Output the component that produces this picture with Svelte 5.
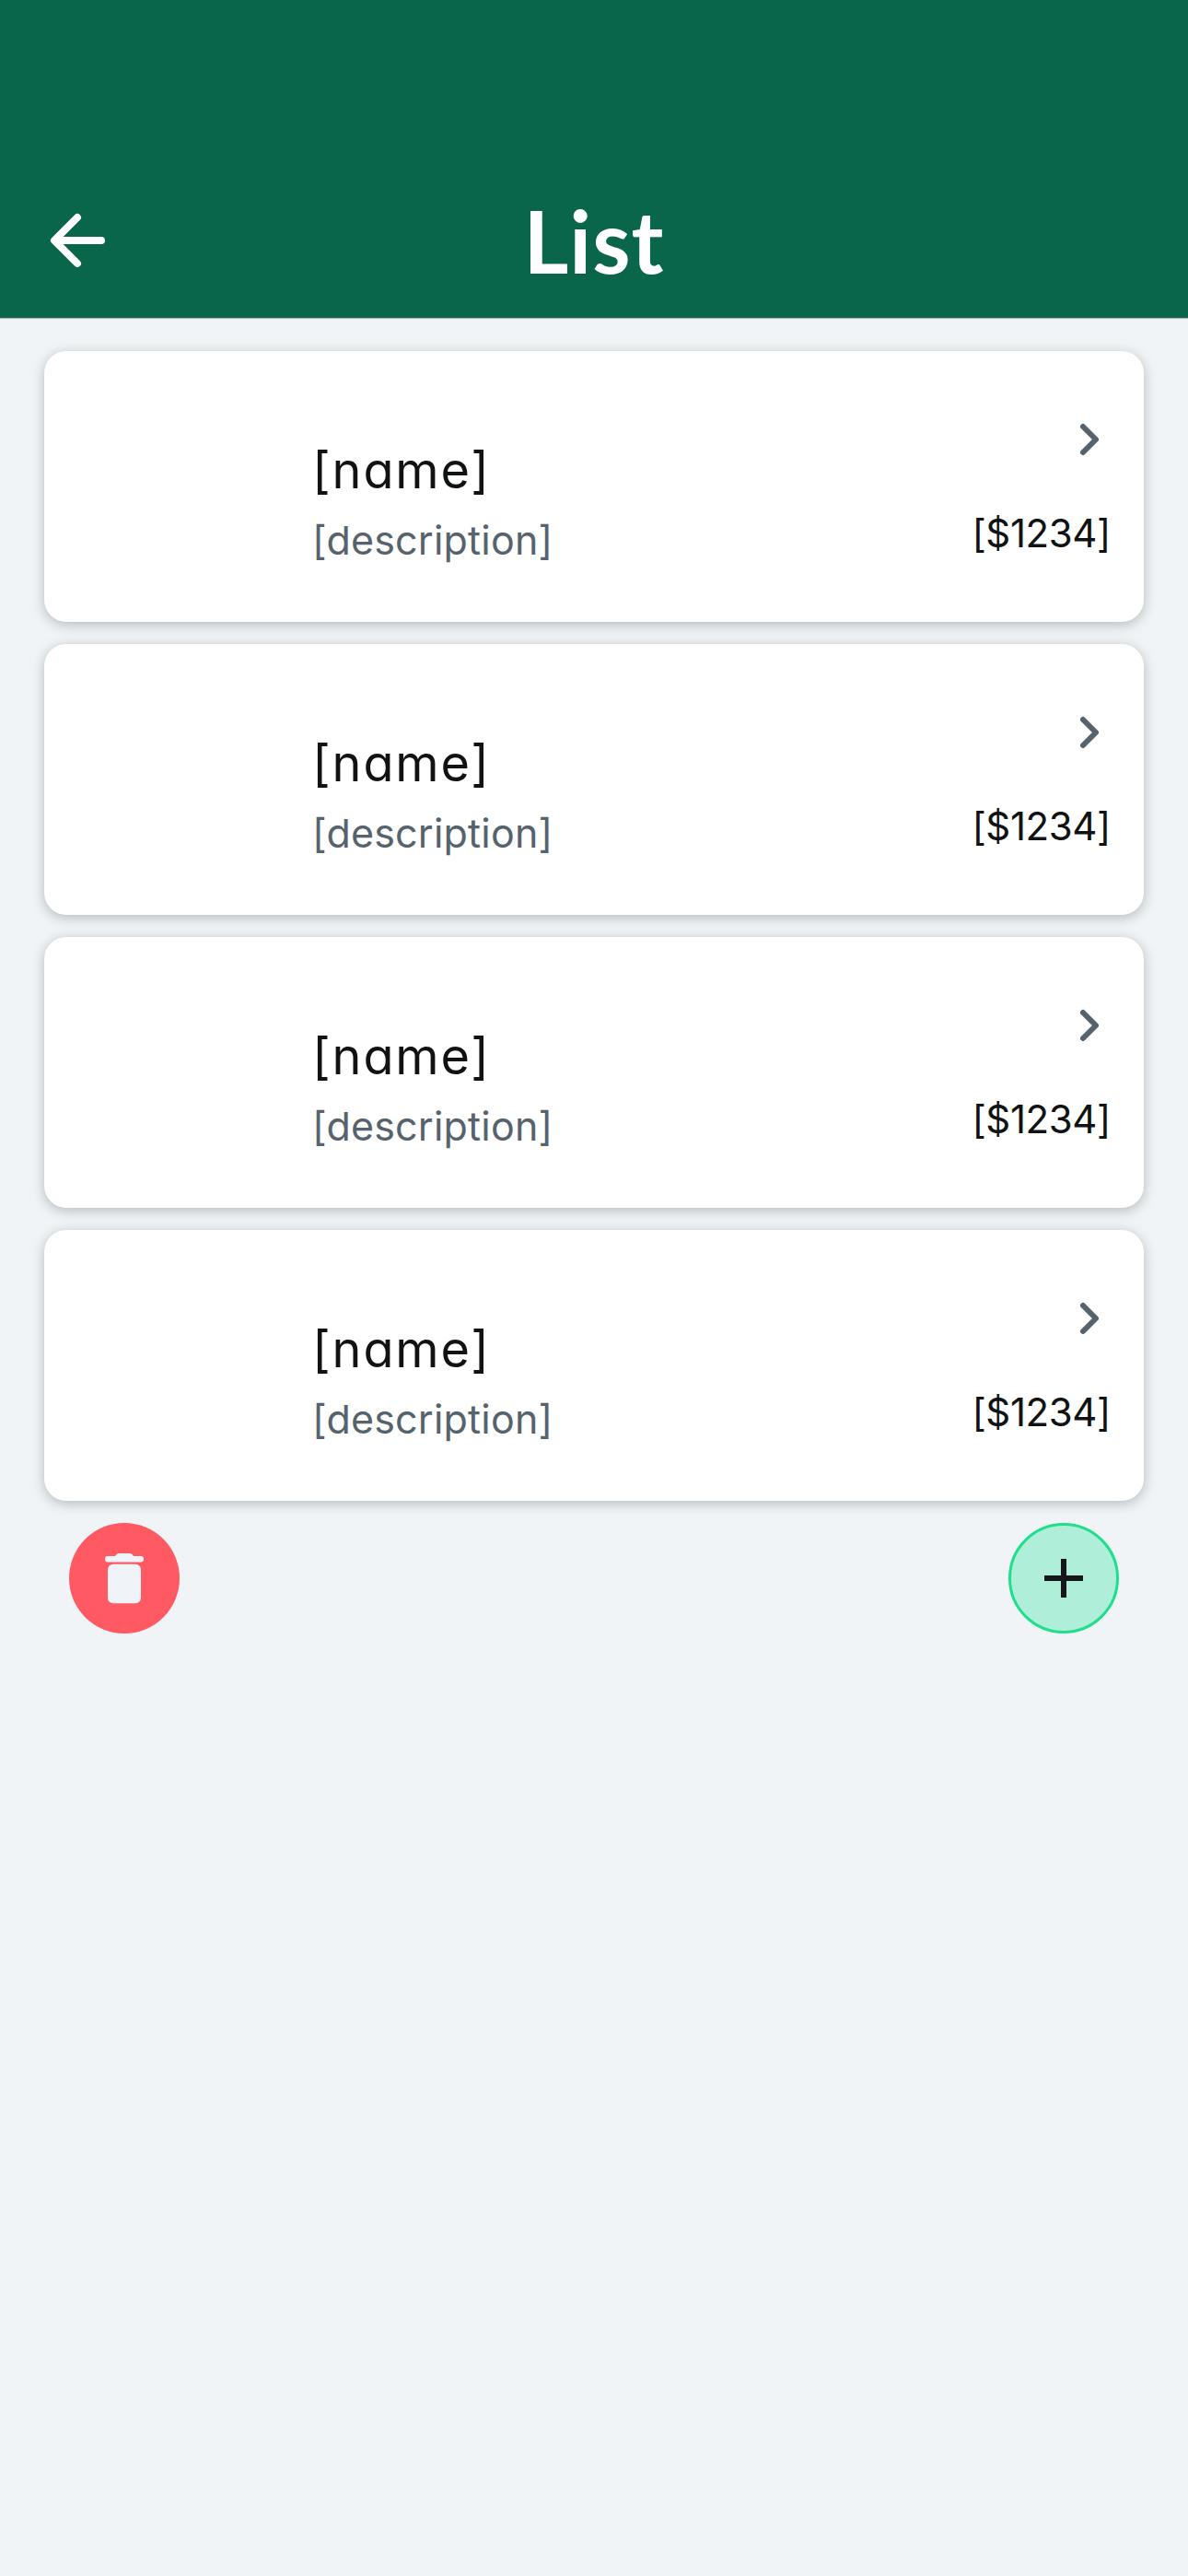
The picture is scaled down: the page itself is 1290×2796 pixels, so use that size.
<script>
  const items = Array.from({ length: 4 }, () => ({
    name: '[name]',
    description: '[description]',
    price: '[$1234]',
  }));
</script>

<main class="screen">
  <header class="bar">
    <button class="back" aria-label="Back">
      <svg width="72" height="72" viewBox="0 0 72 72">
        <path d="M36 11L11 36l25 25M12 36h50" />
      </svg>
    </button>
    <h1>List</h1>
  </header>

  <ul class="list">
    {#each items as item}
      <li class="card">
        <div class="info">
          <div class="name">{item.name}</div>
          <div class="description">{item.description}</div>
        </div>
        <div class="side">
          <svg class="chevron" width="40" height="40" viewBox="0 0 40 40">
            <path d="M13 6l14 14-14 14" />
          </svg>
          <div class="price">{item.price}</div>
        </div>
      </li>
    {/each}
  </ul>

  <div class="actions">
    <button class="round delete" aria-label="Delete">
      <svg width="72" height="72" viewBox="0 0 72 72">
        <path d="M18 12h8q1.500-3 4-3h12q2.500 0 4 3h8q3 0 3 3.200t-3 3.200H18q-3 0-3-3.200T18 12z" />
        <rect x="18" y="20.700" width="36" height="42.500" rx="6" />
      </svg>
    </button>
    <button class="round add" aria-label="Add">
      <svg width="42" height="42" viewBox="0 0 42 42">
        <path d="M18 0h6v18h18v6H24v18h-6V24H0v-6h18z" />
      </svg>
    </button>
  </div>
</main>

<style>
  :global(body) {
    background: #f0f4f7;
  }
  .screen {
    min-height: 2796px;
    background: #f0f4f7;
    font-family: Inter, 'Liberation Sans', sans-serif;
    font-feature-settings: 'cv11' 1;
  }
  button {
    border: 0;
    padding: 0;
    background: none;
  }
  svg {
    display: block;
  }
  .bar {
    box-sizing: border-box;
    height: 345px;
    padding: 177px 48px 0;
    display: grid;
    grid-template-columns: 72px 1fr 72px;
    align-items: center;
    background: #09664a;
    box-shadow: 0 1px 1px rgba(0, 0, 0, 0.25);
  }
  .back path {
    fill: none;
    stroke: #fff;
    stroke-width: 8;
    stroke-linecap: round;
    stroke-linejoin: round;
  }
  h1 {
    margin: 0 0 1px;
    text-align: center;
    color: #fff;
    font-family: Lato, sans-serif;
    font-size: 94px;
    font-weight: 700;
    letter-spacing: 1px;
    line-height: 120px;
  }
  .list {
    margin: 0;
    padding: 36px 48px 24px;
    list-style: none;
    display: flex;
    flex-direction: column;
    gap: 24px;
  }
  .card {
    box-sizing: border-box;
    height: 294px;
    padding: 0 36px 0 291px;
    display: flex;
    justify-content: space-between;
    border-radius: 24px;
    background: #fff;
    box-shadow: 0 3px 14px rgba(20, 30, 35, 0.27);
  }
  .info {
    padding-top: 96px;
  }
  .name {
    color: #101213;
    font-size: 54px;
    letter-spacing: 1.9px;
    line-height: 68px;
    white-space: nowrap;
  }
  .description {
    margin-top: 13px;
    color: #57636c;
    font-size: 43px;
    letter-spacing: 0.2px;
    line-height: 56px;
    white-space: nowrap;
  }
  .side {
    padding-top: 76px;
    display: flex;
    flex-direction: column;
    align-items: flex-end;
  }
  .chevron {
    margin-right: 3px;
  }
  .chevron path {
    fill: none;
    stroke: #57636c;
    stroke-width: 6;
    stroke-linecap: round;
    stroke-linejoin: round;
  }
  .price {
    margin-top: 54px;
    color: #101213;
    font-size: 42px;
    letter-spacing: -0.4px;
    line-height: 56px;
    white-space: nowrap;
  }
  .actions {
    padding: 0 75px;
    display: flex;
    justify-content: space-between;
  }
  .round {
    box-sizing: border-box;
    width: 120px;
    height: 120px;
    border-radius: 50%;
    display: flex;
    align-items: center;
    justify-content: center;
  }
  .delete {
    background: #ff5963;
  }
  .delete svg {
    fill: #f0f4f8;
  }
  .add {
    border: 3px solid #1fdf8c;
    background: #afeed8;
  }
  .add svg {
    fill: #14181b;
  }
</style>
